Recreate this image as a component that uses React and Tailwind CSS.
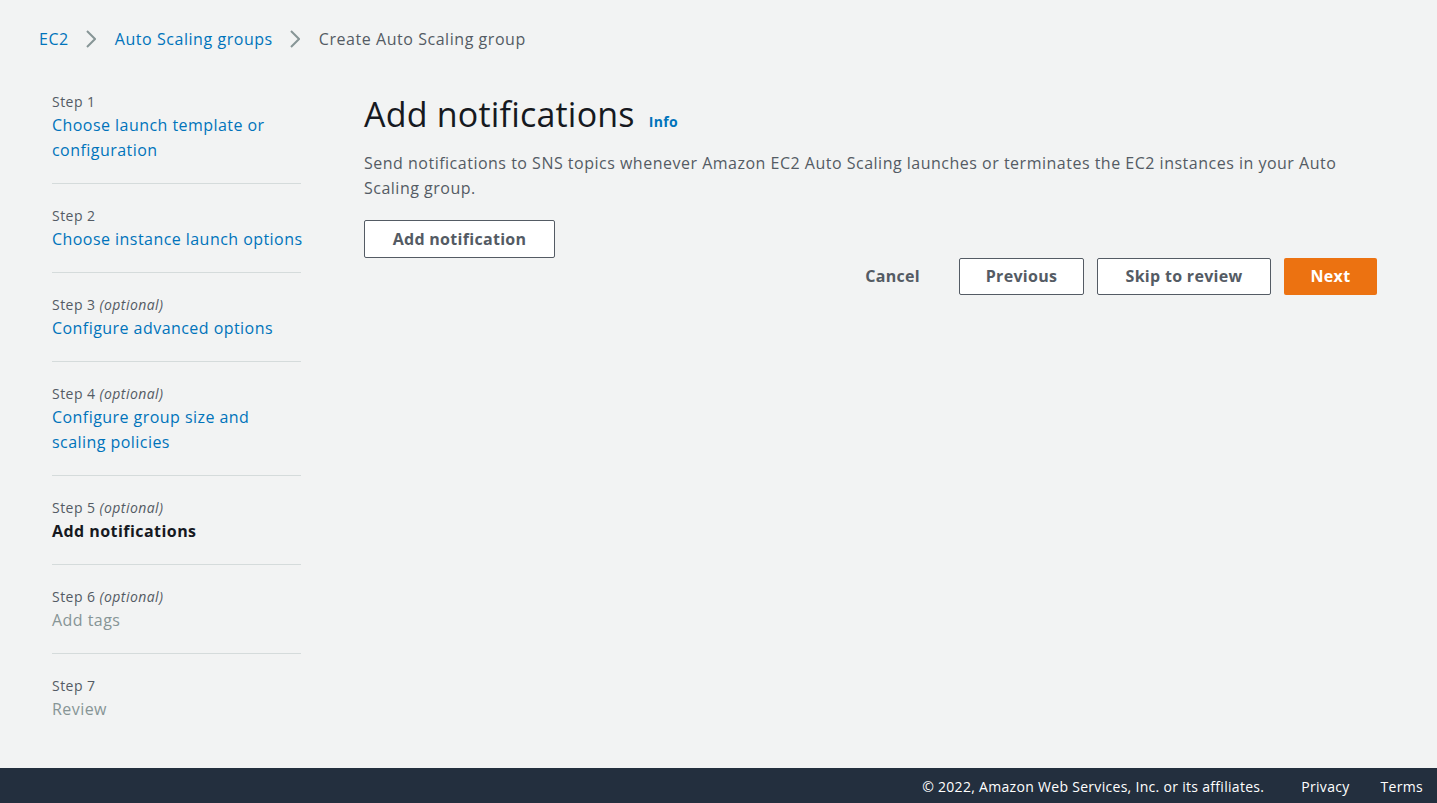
import React from 'react';

const font = { fontFamily: '"Open Sans", "Noto Sans", Arial, sans-serif' };

const steps = [
    { n: 1, title: ['Choose launch template or', 'configuration'], state: 'link' },
    { n: 2, title: ['Choose instance launch options'], state: 'link' },
    { n: 3, optional: true, title: ['Configure advanced options'], state: 'link' },
    { n: 4, optional: true, title: ['Configure group size and', 'scaling policies'], state: 'link' },
    { n: 5, optional: true, title: ['Add notifications'], state: 'active' },
    { n: 6, optional: true, title: ['Add tags'], state: 'disabled' },
    { n: 7, title: ['Review'], state: 'disabled', last: true },
];

const Chevron = () => (
    <svg width="12" height="18" viewBox="0 0 12 18" className="ml-[15px] mr-[19px]">
        <path d="M3 1l8 8-8 8" fill="none" stroke="#879596" strokeWidth="2" />
    </svg>
);

const StepItem = ({ step, first }) => {
    const titleClass =
        step.state === 'link'
            ? 'text-[#0073bb]'
            : step.state === 'active'
            ? 'text-[#16191f] font-bold'
            : 'text-[#879596]';
    return (
        <li className={`${first ? '' : 'pt-[21px]'} ${step.last ? '' : 'pb-[20px] border-b border-[#d5dbdb]'}`}>
            <div className="text-[14px] leading-[22px] tracking-[0.45px] text-[#545b64]">
                Step {step.n}
                {step.optional && <i> (optional)</i>}
            </div>
            <div className={`text-[16px] leading-[25px] tracking-[0.45px] whitespace-nowrap ${titleClass}`}>
                {step.title.map((t) => (
                    <div key={t}>{t}</div>
                ))}
            </div>
        </li>
    );
};

export default function App() {
    return (
        <div className="min-h-screen flex flex-col bg-[#f2f3f3] text-[#16191f]" style={font}>
            <div className="flex-1">
                <nav className="flex items-center pl-[39px] pt-[26px] h-[52px] text-[16px] leading-[24px] tracking-[0.55px]">
                    <span className="text-[#0073bb]">EC2</span>
                    <Chevron />
                    <span className="text-[#0073bb]">Auto Scaling groups</span>
                    <Chevron />
                    <span className="text-[#545b64]">Create Auto Scaling group</span>
                </nav>

                <div className="flex pl-[52px] pt-[39px]">
                    <ul className="w-[249px] shrink-0">
                        {steps.map((s, i) => (
                            <StepItem key={s.n} step={s} first={i === 0} />
                        ))}
                    </ul>

                    <main className="ml-[63px] w-[1013px]">
                        <div className="flex items-baseline gap-[14px] pt-[1px]">
                            <h1 className="text-[34px] leading-[44px] tracking-[0.2px] text-[#16191f]">Add notifications</h1>
                            <span className="text-[14px] font-bold tracking-[0.3px] text-[#0073bb]">Info</span>
                        </div>
                        <p className="mt-[15px] text-[16px] leading-[25px] tracking-[0.5px] text-[#545b64]">
                            Send notifications to SNS topics whenever Amazon EC2 Auto Scaling launches or terminates the EC2 instances in your Auto Scaling group.
                        </p>
                        <button className="mt-[19px] h-[38px] w-[191px] border border-[#545b64] rounded-[2px] bg-white text-[16px] font-bold tracking-[0.3px] text-[#545b64]">
                            Add notification
                        </button>
                        <div className="flex justify-end items-center gap-[13px] tracking-[0.3px]">
                            <button className="h-[37px] pb-[1px] mr-[26px] text-[16px] font-bold text-[#545b64]">Cancel</button>
                            <button className="h-[37px] pb-[1px] w-[125px] border border-[#545b64] rounded-[2px] bg-white text-[16px] font-bold text-[#545b64]">
                                Previous
                            </button>
                            <button className="h-[37px] pb-[1px] w-[174px] border border-[#545b64] rounded-[2px] bg-white text-[16px] font-bold text-[#545b64]">
                                Skip to review
                            </button>
                            <button className="h-[37px] pb-[1px] w-[93px] rounded-[2px] bg-[#ec7211] text-[16px] font-bold text-white">
                                Next
                            </button>
                        </div>
                    </main>
                </div>
            </div>

            <footer className="h-[35px] bg-[#232f3e] flex items-center justify-end pt-[2px] pr-[14px] text-[14px] tracking-[0.3px] text-white">
                <span>© 2022, Amazon Web Services, Inc. or its affiliates.</span>
                <span className="ml-[37px]">Privacy</span>
                <span className="ml-[31px]">Terms</span>
            </footer>
        </div>
    );
}
